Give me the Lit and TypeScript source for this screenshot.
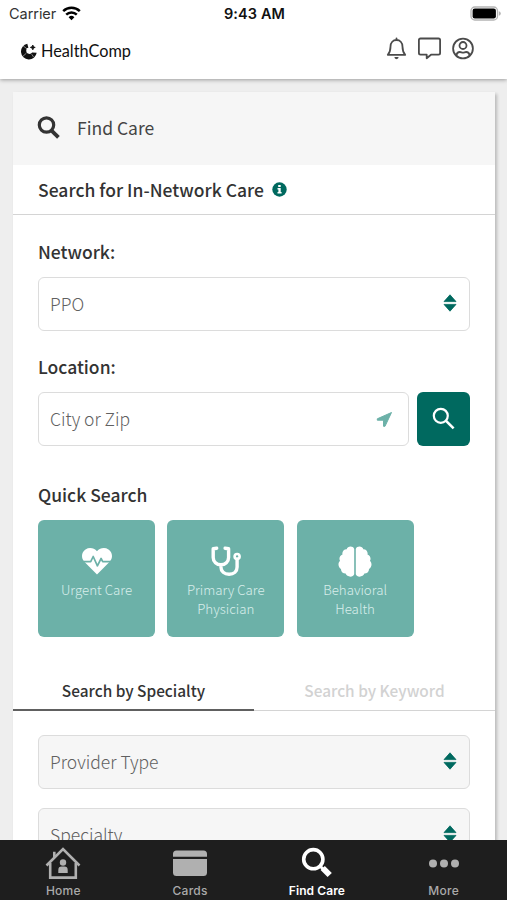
import { LitElement, html, css, svg } from "lit";
import { customElement, property } from "lit/decorators.js";

const sorter = svg`<path d="M1 7.6 7 .8l6 6.8zM1 10.4h12L7 17.2z" fill="#00695f" stroke="#00695f" stroke-width=".8" stroke-linejoin="round"/>`;

@customElement("select-box")
class SelectBox extends LitElement {
  @property() label = "";
  static styles = css`
    :host { display: flex; box-sizing: border-box; height: 54px; border: 1.5px solid #dcdcdc; border-radius: 6px;
      align-items: center; justify-content: space-between; padding: 0 12px 0 11px; background: var(--fill, #fff); }
    span { font: 300 17.5px/26px "Noto Sans CJK SC", sans-serif; color: #606060; white-space: nowrap; padding-bottom: 1px; }
    svg { width: 14px; height: 18px; display: block; margin-bottom: 2px; }
  `;
  render() {
    return html`<span>${this.label}</span><svg viewBox="0 0 14 18">${sorter}</svg>`;
  }
}

@customElement("app-root")
class AppRoot extends LitElement {
  static styles = css`
    :host { display: flex; flex-direction: column; width: 507px; height: 900px; overflow: hidden; background: #eee;
      font-family: "Noto Sans CJK SC", "Noto Sans", sans-serif; color: #333; white-space: nowrap; }
    * { box-sizing: border-box; }
    svg { display: block; flex: none; }
    .top { flex: none; height: 79px; background: #fff; box-shadow: 0 1px 4px rgba(0,0,0,.35); z-index: 1; }
    .status { display: grid; grid-template-columns: 1fr auto 1fr; height: 27px; align-items: center; padding: 0 7px 0 9px;
      font-family: Inter, sans-serif; font-size: 14.5px; color: #111; }
    .carrier { display: flex; align-items: center; gap: 6px; color: #333; letter-spacing: -.05px; }
    .carrier svg { margin-bottom: 1px; }
    .time { font-weight: 600; letter-spacing: .1px; }
    .battery { justify-self: end; margin-right: -1px; }
    .brand { display: flex; height: 46px; align-items: center; justify-content: space-between; padding: 0 32px 0 21px; margin-top: 1px; }
    .logo { display: flex; align-items: center; gap: 4px; font: 400 16.3px/22px Lato, sans-serif; color: #111; }
    .actions { display: flex; gap: 10px; margin-top: -5px; }
    .page { flex: 1; min-height: 0; overflow: hidden; padding: 13px 12px 0 13px; }
    .card { background: #fff; height: 790px; box-shadow: 2px 2px 3px rgba(0,0,0,.22); }
    .head { display: flex; align-items: center; height: 73px; background: #f6f6f6; padding-left: 24px; gap: 16px;
      font-size: 17.5px; line-height: 26px; color: #444; }
    .head span { margin-top: -1px; }
    .head svg { margin-top: -2px; }
    .title { display: flex; align-items: center; gap: 8px; height: 50px; padding-left: 25px; border-bottom: 1.5px solid #d4d4d4; }
    .strong { font-size: 17.5px; line-height: 26px; font-weight: 500; position: relative; top: -1px; }
    .title .strong { top: 0; letter-spacing: .02px; }
    .form { padding: 25px 25px 0; display: flex; flex-direction: column; }
    .field { display: flex; flex-direction: column; gap: 11px; margin-bottom: 24px; }
    .row { display: flex; gap: 8px; }
    .input { flex: 1; height: 54px; border: 1.5px solid #dcdcdc; border-radius: 6px; display: flex; align-items: center;
      justify-content: space-between; padding: 0 15px 0 11px; font-size: 17.5px; font-weight: 300; line-height: 26px; color: #606060; }
    .go { width: 53px; height: 54px; border-radius: 6px; background: #00695f; display: grid; place-items: center; }
    .tiles { display: flex; gap: 12.3px; }
    .tile { width: 117px; height: 117px; border-radius: 6px; background: #6cb1a8; color: #d9eeeb; font-size: 13.3px; font-weight: 300;
      line-height: 18.5px; text-align: center; display: flex; flex-direction: column; align-items: center; gap: 3px; padding-top: 24px; }
    .quick { margin: 13px 0 0; gap: 11px; }
    .tabs { display: grid; grid-template-columns: 1fr 1fr; height: 49px; margin-top: 25px; }
    .tab { border-bottom: 1.5px solid #d4d4d4; text-align: center; font-size: 15.4px; line-height: 24px; font-weight: 500; padding-top: 16px; color: #d2d2d2; }
    .tab.on { color: #333; border-bottom: 2px solid #606060; }
    .picks { padding: 24px 25px 0; display: flex; flex-direction: column; gap: 19px; --fill: #f6f6f6; }
    .nav { flex: none; height: 60px; background: #1e1e1e; display: grid; grid-template-columns: repeat(4, 1fr); z-index: 1; }
    .item { display: flex; flex-direction: column; align-items: center; color: #aaa; font: 500 12px/16px Inter, sans-serif;
      letter-spacing: .25px; padding-top: 6px; gap: 3px; }
    .item.on { color: #fff; font-weight: 600; letter-spacing: .1px; }
  `;

  render() {
    return html`
      <div class="top">
        <div class="status">
          <div class="carrier"><span>Carrier</span>
            <svg width="19" height="15" viewBox="0 0 19 15" fill="none" stroke="#000" stroke-width="2.5"><path d="M1.2 5.2a12 12 0 0 1 16.6 0M4.2 8.6a7.6 7.6 0 0 1 10.6 0"/><path d="M9.5 14.2 6.6 11.2a4.2 4.2 0 0 1 5.8 0z" fill="#000" stroke="none"/></svg>
          </div>
          <div class="time">9:43 AM</div>
          <svg class="battery" width="31" height="15" viewBox="0 0 31 15"><rect x="1" y="1" width="26.5" height="13" rx="3.8" fill="#fff" stroke="#b4b4b4" stroke-width="1.3"/><rect x="2.6" y="2.6" width="23.3" height="9.8" rx="2.2"/><path d="M28.8 5.2q2 .6 2 2.3t-2 2.3z" fill="#b4b4b4"/></svg>
        </div>
        <div class="brand">
          <div class="logo">
            <svg width="16" height="17" viewBox="0 0 16 17"><path d="M6.300.8A7.900 7.900 0 1 0 15.700 9.800L11.200 9.500A3.300 3.300 0 0 1 5.200 7.900L5.600 5.300 7.400 4.700z" fill="#111"/><path d="M2.200 2.900 5.600 5.500M1.900 13.300l3.500-3.100M12.700 14.200l-2-3" stroke="#fff" stroke-width=".5"/><path d="M11.800 2c.4 1.500.9 2 2.400 2.400-1.500.4-2 .9-2.400 2.400-.4-1.500-.9-2-2.400-2.400 1.500-.4 2-.9 2.400-2.400z" fill="#111" stroke="#111" stroke-width=".9"/></svg>
            <span>HealthComp</span>
          </div>
          <div class="actions">
            <svg width="22" height="24" viewBox="0 0 22 24" fill="none" stroke="#4b4b4b" stroke-width="1.800" stroke-linejoin="round" stroke-linecap="round"><path d="M10.500 1.400v1.400M1.800 17.800c1.800-2 2.700-3.300 2.700-8C4.500 5.600 7.100 3 10.500 3s6 2.600 6 6.800c0 4.700.9 6 2.700 8z"/><path d="M8.400 20.100h4.200a2.100 2.100 0 0 1-4.200 0z" fill="#4b4b4b" stroke="none"/></svg>
            <svg width="24" height="24" viewBox="0 0 24 24" fill="none" stroke="#4b4b4b" stroke-width="1.800" stroke-linejoin="round"><path d="M2.500 1.500h18q1.600 0 1.600 1.600v13q0 1.600-1.600 1.600h-7.500L8.700 21.200v-3.500H2.500q-1.600 0-1.600-1.600v-13Q.9 1.500 2.500 1.500z"/></svg>
            <svg width="23" height="24" viewBox="0 0 23 24" fill="none" stroke="#4b4b4b" stroke-width="1.800"><circle cx="11" cy="11.500" r="9.900"/><circle cx="11" cy="8.500" r="3.500"/><path d="M4.300 18.700c.4-2.400 1.800-3.700 3.600-3.700 1.300 0 1.800.6 3.100.6s1.800-.6 3.100-.6c1.800 0 3.200 1.300 3.600 3.700"/></svg>
          </div>
        </div>
      </div>

      <div class="page">
        <div class="card">
          <div class="head">
            <svg width="24" height="24" viewBox="0 0 24 24" fill="none" stroke="#333"><circle cx="9.500" cy="9" r="7.200" stroke-width="3.200"/><path d="m14.600 14.600 6.800 6.800" stroke-width="3.800"/></svg>
            <span>Find Care</span>
          </div>
          <div class="title">
            <span class="strong">Search for In-Network Care</span>
            <svg width="15" height="15" viewBox="0 0 15 15"><circle cx="7.500" cy="7.500" r="7.200" fill="#00695f"/><path d="M6.200 2.900h2.500v2H6.200zM5.500 6h3.200v4h.9v1.500H5.500V10h.9V7.500h-.9z" fill="#fff"/></svg>
          </div>
          <div class="form">
            <div class="field"><span class="strong">Network:</span><select-box label="PPO"></select-box></div>
            <div class="field"><span class="strong">Location:</span>
              <div class="row">
                <div class="input"><span>City or Zip</span>
                  <svg width="17" height="17" viewBox="0 0 17 17"><path d="M15.500 1.500 9 15.300H7.500V9.200H1.300V7.800z" fill="#6cb1a8" stroke="#6cb1a8" stroke-linejoin="round"/></svg>
                </div>
                <div class="go"><svg width="24" height="24" viewBox="0 0 24 24" fill="none" stroke="#fff" stroke-width="2.200"><circle cx="8.800" cy="8.800" r="7"/><path d="m13.800 13.600 7.800 7.800" stroke-width="2.600"/></svg></div>
              </div>
            </div>
            <div class="field quick"><span class="strong">Quick Search</span>
              <div class="tiles">
                <div class="tile">
                  <svg width="32" height="34" viewBox="0 0 32 34" fill="#fff"><path d="M16 30.500 3.300 17.700C-.5 13.500.8 8 4.500 5.500 8.500 3 13 4 16 7.300 19 4 23.500 3 27.500 5.500c3.700 2.500 5 8 1.200 12.200z"/><path d="M1 17.700h8.700l2.500-5.200 4.200 9.300 3.700-7.300 1.600 3.200H31" fill="none" stroke="#6cb1a8" stroke-width="1.700" stroke-linejoin="round"/></svg>
                  <div>Urgent Care</div>
                </div>
                <div class="tile">
                  <svg width="32" height="34" viewBox="0 0 32 34" fill="none" stroke="#fff" stroke-width="3.400" stroke-linejoin="round" stroke-linecap="round"><path d="M6.700 4.200 3.200 4.700v8.800c0 4.200 3.400 7.300 7.700 7.300s7.700-3.100 7.700-7.300V4.700l-3.500-.5M10.900 21v1.800c0 4.600 3.500 7.500 8.200 7.500s8-3 8-7.300V15"/><circle cx="27.100" cy="12.500" r="2.500" stroke-width="2.600"/></svg>
                  <div>Primary Care<br>Physician</div>
                </div>
                <div class="tile">
                  <svg width="34" height="34" viewBox="0 0 34 34" fill="#fff"><path d="M16.200 5C15 1.500 9.500 2 8.700 5.200 5.500 5.200 3.800 8 4.500 10.600 1.500 12 .8 14.500 2 16.800-.5 19.500.3 23.500 3 25c-.2 3 2 4.600 4.600 4.600C8.500 33 15 34 16.200 30.300z"/><path d="M17.800 5C19 1.500 24.500 2 25.300 5.200c3.200 0 4.900 2.800 4.200 5.400 3 1.400 3.700 3.900 2.500 6.200 2.500 2.700 1.700 6.700-1 8.200.2 3-2 4.600-4.600 4.600-.9 3.400-7.400 4.400-8.600.7z"/></svg>
                  <div>Behavioral<br>Health</div>
                </div>
              </div>
            </div>
          </div>
          <div class="tabs"><div class="tab on"><span>Search by Specialty</span></div><div class="tab"><span>Search by Keyword</span></div></div>
          <div class="picks"><select-box label="Provider Type"></select-box><select-box label="Specialty"></select-box></div>
        </div>
      </div>

      <div class="nav">
        <div class="item">
          <svg width="36" height="34" viewBox="0 0 36 34" fill="none" stroke="#b0b0b0" stroke-width="2.600"><path d="M1.500 19.500 18 3.200l16.500 16.300"/><path d="M5.200 17v14.600h25.600V17M9.300 11.500V5.800"/><circle cx="18" cy="16.500" r="3.200" fill="#b0b0b0" stroke="none"/><path d="M13.300 27v-3q0-3.400 3.400-3.400h2.600q3.400 0 3.400 3.400v3z" fill="#b0b0b0" stroke="none"/></svg>
          <span>Home</span>
        </div>
        <div class="item">
          <svg width="36" height="34" viewBox="0 0 36 34" fill="#b0b0b0"><path d="M1 10.700V8q0-3.500 3.500-3.500h27Q35 4.500 35 8v2.700zM1 13h34v13.500q0 3.500-3.500 3.500h-27Q1 30 1 26.500z"/></svg>
          <span>Cards</span>
        </div>
        <div class="item on">
          <svg width="36" height="34" viewBox="0 0 36 34" fill="none" stroke="#fff"><circle cx="14.300" cy="13.200" r="9.600" stroke-width="3.600"/><path d="m21 20 4 4" stroke-width="3"/><path d="m23.700 22 7 7" stroke-width="6"/></svg>
          <span>Find Care</span>
        </div>
        <div class="item">
          <svg width="36" height="34" viewBox="0 0 36 34" fill="#b0b0b0"><circle cx="7" cy="17.500" r="4"/><circle cx="18" cy="17.500" r="4"/><circle cx="29" cy="17.500" r="4"/></svg>
          <span>More</span>
        </div>
      </div>`;
  }
}
